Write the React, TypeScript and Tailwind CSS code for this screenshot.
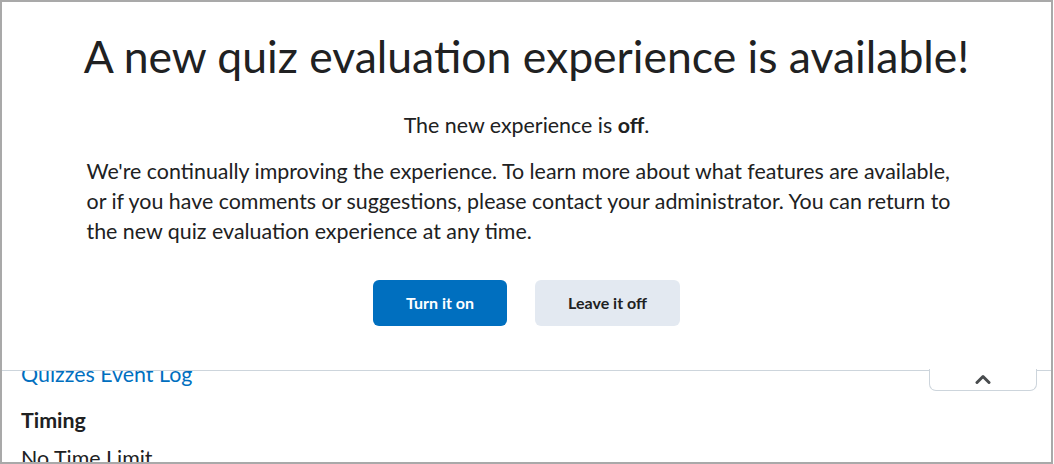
const ChevronUp = () => (
  <svg width="16" height="10" viewBox="0 0 16 10" fill="none">
    <path d="M2 8.5 L8 2.5 L14 8.5" stroke="#494c4e" strokeWidth="3" strokeLinecap="round" strokeLinejoin="round" />
  </svg>
);

const App = () => {
  return (
    <div className="h-[464px] w-[1054px] overflow-hidden bg-white font-['Lato','Noto_Sans',sans-serif] text-[#202122]">
      <div className="h-[464px] w-[1053px] overflow-hidden border-2 border-[#a9a9a9]">
        {/* Banner over the page */}
        <div className="relative z-10 h-[369px] border-b border-[#cdd5dc] bg-white">
          <div className="flex flex-col items-center pt-[26px]">
            <h1 className="text-[44.5px] leading-[56px] font-normal">
              A new quiz evaluation experience is available!
            </h1>
            <p className="mt-[26px] text-[21.4px] leading-[30px]">
              The new experience is <b className="font-bold">off</b>.
            </p>
            <p className="mt-[16px] w-[880px] text-[21.4px] leading-[30px]">
              We're continually improving the experience. To learn more about what features are available,
              <br />
              or if you have comments or suggestions, please contact your administrator. You can return to
              <br />
              the new quiz evaluation experience at any time.
            </p>
            <div className="mt-[34px] flex gap-[28px]">
              <button className="h-[46px] w-[134px] rounded-[6px] bg-[#006fbf] text-[16px] font-bold text-white">
                Turn it on
              </button>
              <button className="h-[46px] w-[145px] rounded-[6px] bg-[#e3e9f1] text-[16px] font-bold text-[#202122]">
                Leave it off
              </button>
            </div>
          </div>
          <div className="absolute right-[14px] top-[calc(100%-1px)] flex h-[22px] w-[108px] items-start justify-center rounded-b-[7px] border border-t-0 border-[#cdd5dc] bg-white pt-[5px]">
            <ChevronUp />
          </div>
        </div>

        {/* Page content underneath */}
        <div className="-mt-[12px] px-[19px]">
          <a className="block text-[21.4px] leading-[30px] text-[#006fbf]">Quizzes Event Log</a>
          <h2 className="mt-[16px] text-[21.4px] leading-[30px] font-bold">Timing</h2>
          <p className="mt-[8px] text-[21.4px] leading-[30px]">No Time Limit</p>
        </div>
      </div>
    </div>
  );
};

export default App;
